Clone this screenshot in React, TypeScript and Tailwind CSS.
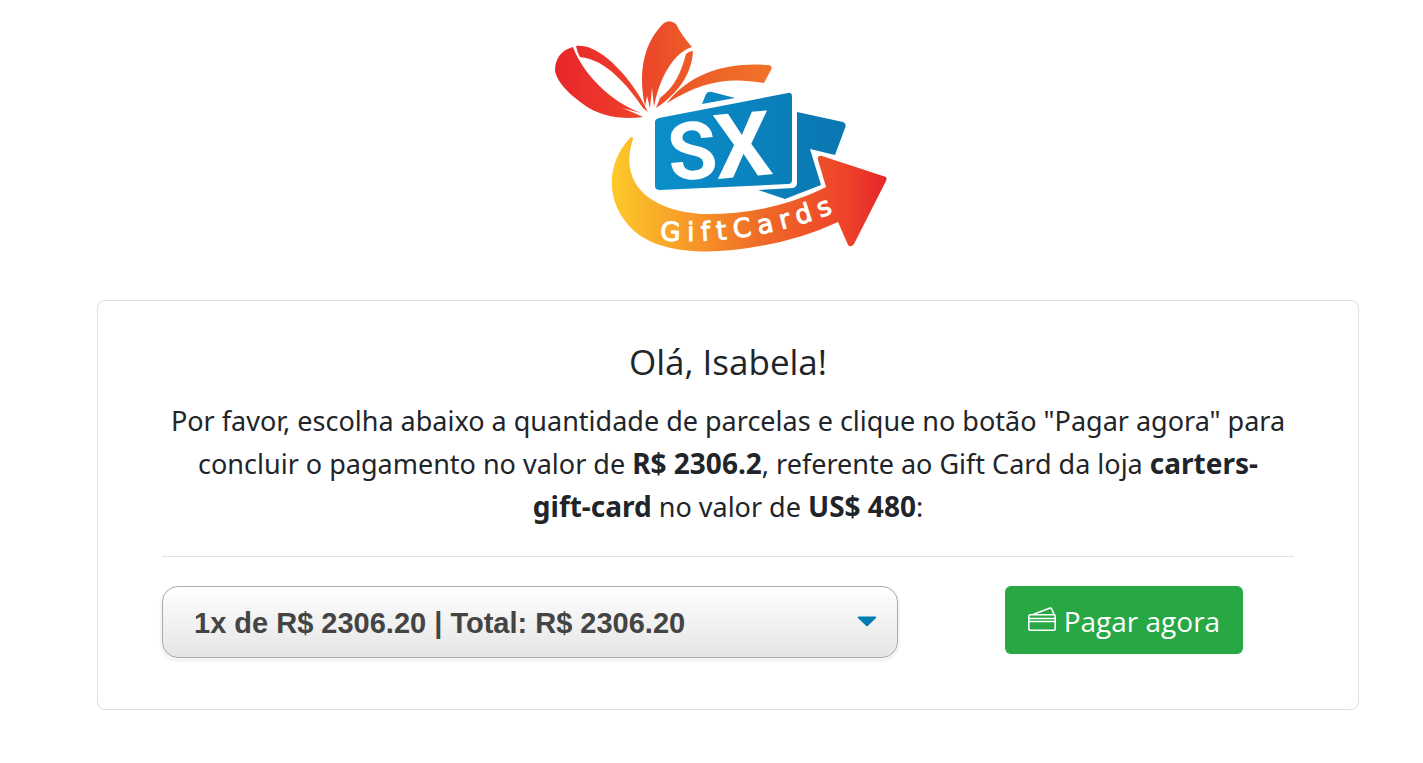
import React, { useState } from 'react';

interface Installment {
  value: string;
  label: string;
}

const installments: Installment[] = [
  { value: '1', label: '1x de R$ 2306.20 | Total: R$ 2306.20' },
];

const Logo: React.FC = () => (
  <svg viewBox="540 10 360 260" className="w-[360px] h-[260px]" role="img" aria-label="SX GiftCards">
    <defs>
      <linearGradient id="bow" gradientUnits="userSpaceOnUse" x1="555" y1="0" x2="772" y2="0">
        <stop offset="0" stopColor="#e8262c" />
        <stop offset="0.3" stopColor="#ed3a2b" />
        <stop offset="0.6" stopColor="#ec5a28" />
        <stop offset="1" stopColor="#f27428" />
      </linearGradient>
      <linearGradient id="blue" gradientUnits="userSpaceOnUse" x1="655" y1="0" x2="846" y2="0">
        <stop offset="0" stopColor="#0a8fcb" />
        <stop offset="1" stopColor="#0b76b0" />
      </linearGradient>
      <linearGradient id="arrow" gradientUnits="userSpaceOnUse" x1="612" y1="0" x2="886" y2="0">
        <stop offset="0" stopColor="#fcc92a" />
        <stop offset="0.28" stopColor="#f79a28" />
        <stop offset="0.55" stopColor="#ee6a26" />
        <stop offset="0.85" stopColor="#ee432a" />
        <stop offset="1" stopColor="#e6262c" />
      </linearGradient>
      <path id="curve" d="M660 240 Q755 247 848 207" />
    </defs>

    {/* Bow */}
    <g fill="url(#bow)">
      <path d="M573 47 C561 50 555 59 555 70 C556 81 569 94 583 104 C600 117 624 120 643 117 L632 112 L622 108 L641 113 C612 102 584 76 573 47Z" />
      <path d="M576 46 C599 42 633 79 648 112 L643 108 C629 87 606 59 580 57 Q577 52 576 46Z" />
      <path d="M645 106 C637 68 646 40 664 23 Q670 19 676 24 Q682 36 692 47 C675 52 660 75 654 107 L652 88 L650 108 L647 96Z" />
      <path d="M693 51 C692 73 679 93 656 108 L660 98 C675 87 682 70 686 54 Q689 51 693 51Z" />
      <path d="M667 103 C690 73 726 62 769 65 Q773 66 771 70 L764 83 C728 77 703 81 667 103Z" />
    </g>

    {/* Stacked cards */}
    <g fill="url(#blue)">
      <path d="M702 104 L706 94 Q708 91 712 92 L735 98Z" />
      <path d="M797 112 L843 122 Q847 124 845 128 L835 155 L810 149 L821 185 L785 199 L758 190 L793 188 Q797 187 797 183Z" />
      <path d="M659 118 L788 93 Q792 92 792 97 V180 Q792 184 788 184 L660 190 Q655 190 655 186 V122 Q655 119 659 118Z" />
    </g>

    {/* Arrow */}
    <path
      fill="url(#arrow)"
      d="M631 137 C607 161 603 201 633 230 C661 255 712 255 760 246 Q802 239 838 222 L848 245 Q851 248 854 244 L886 181 Q888 177 883 176 L822 156 Q817 155 818 160 L826 187 C786 207 744 215 700 214 C651 210 618 185 633 139 Q633 136 631 137Z"
    />

    <text transform="translate(670 181) rotate(-5)" fill="#fff" fontFamily="Roboto, sans-serif" fontWeight="700" fontSize="80">S</text>
    <text transform="translate(717 179) rotate(-5)" fill="#fff" fontFamily="Roboto, sans-serif" fontWeight="700" fontSize="90">X</text>
    <text fill="#fff" stroke="#fff" strokeWidth="1" fontFamily="DejaVu Sans, sans-serif" fontSize="26">
      <textPath href="#curve">
        {'GiftCards'.split('').map((c, i) => (
          <tspan key={i} dx={i ? 7 : 0}>{c}</tspan>
        ))}
      </textPath>
    </text>
  </svg>
);

const CardIcon: React.FC = () => (
  <svg viewBox="0 0 28 24" className="w-7 h-6 shrink-0 -mt-1" fill="none" stroke="currentColor" strokeWidth="1.6" strokeLinejoin="round" aria-hidden="true">
    <rect x="0.8" y="7.8" width="26.4" height="15.4" rx="1.5" />
    <path d="M1 11.5H27M1 14.5H27" />
    <path d="M5 7.5L21.5 1.2Q23 0.6 23.6 1.8L26.8 9" />
  </svg>
);

const App: React.FC = () => {
  const [selected, setSelected] = useState('1');

  return (
    <main className="bg-white text-[#212529] font-['Open_Sans','Noto_Sans',sans-serif]">
      <header className="flex justify-center pt-[10px] pl-[17px]">
        <Logo />
      </header>

      <section className="mt-[30px] ml-[97px] mr-16 mb-8 border border-[#dfdfdf] rounded-lg px-16 pt-9 pb-[51px]">
        <h1 className="text-center text-[35px] leading-[50px]">Olá, Isabela!</h1>
        <p className="mt-3 text-center font-['Noto_Sans',sans-serif] text-[27px] leading-[43px]">
          Por favor, escolha abaixo a quantidade de parcelas e clique no botão "Pagar agora" para concluir o pagamento no valor de{' '}
          <strong className="text-[28px]">R$ 2306.2</strong>, referente ao Gift Card da loja{' '}
          <strong className="text-[28px]">carters-<span className="whitespace-nowrap">gift-card</span></strong> no valor de{' '}
          <strong className="text-[28px]">US$ 480</strong>:
        </p>
        <hr className="mt-7 mb-[29px] border-[#e3e3e3]" />

        <div className="flex items-start">
          <div className="relative w-[65%]">
            <select
              aria-label="Quantidade de parcelas"
              value={selected}
              onChange={(e) => setSelected(e.target.value)}
              className="block w-full h-[72px] appearance-none rounded-2xl border border-[#aaa] bg-linear-to-b from-white to-[#e5e5e5] pt-[3px] pl-[31px] pr-14 font-['Liberation_Sans',Arial,sans-serif] text-[29px] font-bold text-[#444] shadow-[0_2px_1px_2px_rgba(0,0,0,0.04)]"
            >
              {installments.map((item) => (
                <option key={item.value} value={item.value}>{item.label}</option>
              ))}
            </select>
            <svg viewBox="0 0 20 11" className="pointer-events-none absolute right-[21px] top-[30px] w-5 h-[11px]" fill="#007cb2" aria-hidden="true">
              <path d="M1.5 0.5H18.5Q20 1 19 2L11 9.8Q10 10.8 9 9.8L1 2Q0 1 1.5 0.5Z" />
            </svg>
          </div>
          <div className="flex flex-1 justify-center pl-14">
            <button type="button" className="flex h-[68px] items-center gap-2 whitespace-nowrap rounded-md bg-[#28a745] px-[23px] pt-0.5 text-[28px] text-white">
              <CardIcon />
              Pagar agora
            </button>
          </div>
        </div>
      </section>
    </main>
  );
};

export default App;
